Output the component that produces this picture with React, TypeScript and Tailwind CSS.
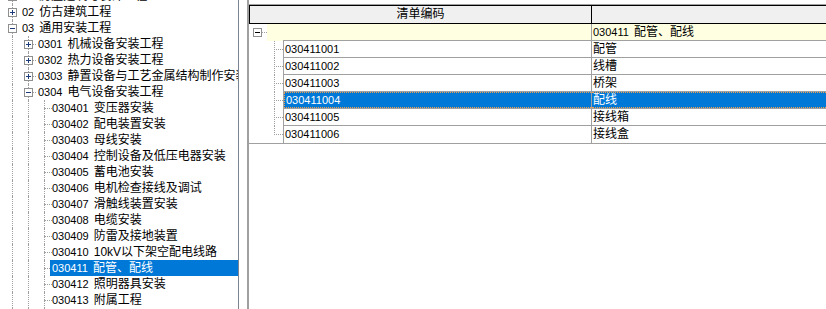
import clsx from "clsx";

type Node = {
  lv: number;
  exp?: "plus" | "minus";
  code: string;
  name: string;
  selected?: boolean;
};

const tree: Node[] = [
  { lv: 0, exp: "plus", code: "01", name: "房屋建筑与装饰工程" },
  { lv: 0, exp: "plus", code: "02", name: "仿古建筑工程" },
  { lv: 0, exp: "minus", code: "03", name: "通用安装工程" },
  { lv: 1, exp: "plus", code: "0301", name: "机械设备安装工程" },
  { lv: 1, exp: "plus", code: "0302", name: "热力设备安装工程" },
  { lv: 1, exp: "plus", code: "0303", name: "静置设备与工艺金属结构制作安装工程" },
  { lv: 1, exp: "minus", code: "0304", name: "电气设备安装工程" },
  { lv: 2, code: "030401", name: "变压器安装" },
  { lv: 2, code: "030402", name: "配电装置安装" },
  { lv: 2, code: "030403", name: "母线安装" },
  { lv: 2, code: "030404", name: "控制设备及低压电器安装" },
  { lv: 2, code: "030405", name: "蓄电池安装" },
  { lv: 2, code: "030406", name: "电机检查接线及调试" },
  { lv: 2, code: "030407", name: "滑触线装置安装" },
  { lv: 2, code: "030408", name: "电缆安装" },
  { lv: 2, code: "030409", name: "防雷及接地装置" },
  { lv: 2, code: "030410", name: "10kV以下架空配电线路" },
  { lv: 2, code: "030411", name: "配管、配线", selected: true },
  { lv: 2, code: "030412", name: "照明器具安装" },
  { lv: 2, code: "030413", name: "附属工程" },
  { lv: 2, code: "030414", name: "电气调整试验" },
];

const items = [
  { code: "030411001", name: "配管" },
  { code: "030411002", name: "线槽" },
  { code: "030411003", name: "桥架" },
  { code: "030411004", name: "配线", selected: true },
  { code: "030411005", name: "接线箱" },
  { code: "030411006", name: "接线盒" },
];

function ToggleBox({ kind, sign }: { kind: "plus" | "minus"; sign: string }) {
  return (
    <svg width="9" height="9" viewBox="0 0 9 9" shapeRendering="crispEdges" className="block">
      <rect x="0.5" y="0.5" width="8" height="8" fill="#fff" stroke="#8f8f8f" />
      <path d="M2 4.5h5" stroke={sign} />
      {kind === "plus" && <path d="M4.5 2v5" stroke={sign} />}
    </svg>
  );
}

function TreeRow({ node }: { node: Node }) {
  return (
    <div className="flex h-4 items-stretch whitespace-nowrap pl-1">
      {Array.from({ length: node.lv }).map((_, i) => (
        <div key={i} className="flex w-4 shrink-0 justify-center">
          <div className="h-full border-l border-dotted border-[#a0a0a0]" />
        </div>
      ))}
      <div className="grid w-4 shrink-0">
        <div className="col-start-1 row-start-1 h-full justify-self-center border-l border-dotted border-[#a0a0a0]" />
        {node.lv > 0 && (
          <div className="col-start-1 row-start-1 w-1/2 self-center justify-self-end border-t border-dotted border-[#a0a0a0]" />
        )}
        {node.exp && (
          <div className="col-start-1 row-start-1 place-self-center">
            <ToggleBox kind={node.exp} sign="#1e3a78" />
          </div>
        )}
      </div>
      <div
        className={clsx(
          "flex-1 px-[2px] leading-4",
          node.lv === 2 && "-ml-0.5",
          node.selected ? "bg-[#0078d7] text-white" : "text-black"
        )}
      >
        <span className="text-[11px]">{node.code}</span>
        <span className="ml-[5px]">{node.name}</span>
      </div>
    </div>
  );
}

function ItemRow({ code, name, selected, last }: { code: string; name: string; selected?: boolean; last: boolean }) {
  return (
    <div className="flex h-[17px]">
      <div className="w-[34px] shrink-0 pl-[25px]">
        <div className="grid h-[17px] w-[9px]">
          <div
            className={clsx(
              "col-start-1 row-start-1 justify-self-start border-l border-dotted border-[#a0a0a0]",
              last ? "h-[9px] self-start" : "h-full"
            )}
          />
          <div className="col-start-1 row-start-1 w-full self-center border-t border-dotted border-[#a0a0a0]" />
        </div>
      </div>
      <div
        className={clsx(
          "w-[309px] shrink-0 border-l border-r border-[#a0a0a0]",
          !last && "border-b",
          selected && "bg-[#0078d7] text-white"
        )}
      >
        <div
          className={clsx(
            "h-full pl-[1px] text-[11px]",
            selected ? "border-y border-l border-dotted border-[#f4a04c] leading-[14px]" : "leading-4"
          )}
        >
          {code}
        </div>
      </div>
      <div className={clsx("flex-1 border-[#a0a0a0]", !last && "border-b", selected && "bg-[#0078d7] text-white")}>
        <div
          className={clsx(
            "h-full pl-[1px]",
            selected ? "border-y border-dotted border-[#f4a04c] leading-[14px]" : "leading-4"
          )}
        >
          {name}
        </div>
      </div>
    </div>
  );
}

export default function App() {
  return (
    <div className="flex h-[309px] w-[826px] overflow-hidden bg-white text-[12px] text-black font-['Liberation_Sans','Noto_Sans_CJK_SC',sans-serif]">
      <div className="w-[239px] shrink-0 overflow-hidden border-r border-[#7a8591]">
        <div className="-mt-3">
          {tree.map((n) => (
            <TreeRow key={n.code} node={n} />
          ))}
        </div>
      </div>

      <div className="ml-2 flex-1 border-l-2 border-[#a0a0a0]">
        <div className="h-[5px] border-b border-[#a0a0a0]" />
        <div className="flex h-[19px] border-y border-l border-black bg-[#f0f0f0]">
          <div className="w-[342px] shrink-0 border-r border-black text-center leading-[17px]">清单编码</div>
          <div className="flex-1" />
        </div>

        <div className="flex h-[17px]">
          <div className="flex w-[18px] shrink-0 items-center pl-1">
            <ToggleBox kind="minus" sign="#000" />
            <div className="flex-1 border-t border-dotted border-[#a0a0a0]" />
          </div>
          <div className="w-4 shrink-0 bg-[#ffffe1]" />
          <div className="w-[309px] shrink-0 border-b border-r border-[#a0a0a0] bg-[#ffffe1]" />
          <div className="flex-1 border-b border-[#a0a0a0] bg-[#ffffe1] pl-[1px] leading-4">
            <span className="text-[11px]">030411</span>
            <span className="ml-[5px]">配管、配线</span>
          </div>
        </div>

        <div className="border-b border-[#a0a0a0]">
          {items.map((it, i) => (
            <ItemRow key={it.code} {...it} last={i === items.length - 1} />
          ))}
        </div>
      </div>
    </div>
  );
}
